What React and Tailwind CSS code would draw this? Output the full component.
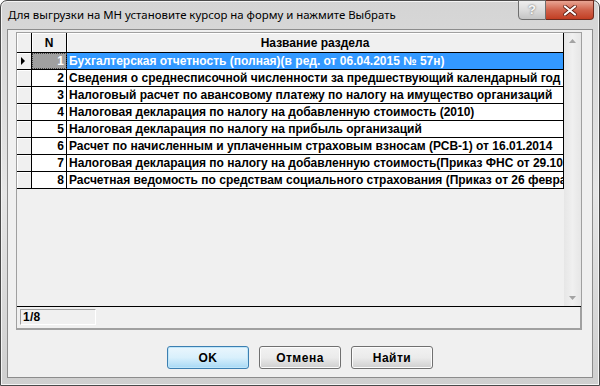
const rows = [
  "Бухгалтерская отчетность (полная)(в ред. от 06.04.2015 № 57н)",
  "Сведения о среднесписочной численности за предшествующий календарный год",
  "Налоговый расчет по авансовому платежу по налогу на имущество организаций",
  "Налоговая декларация по налогу на добавленную стоимость (2010)",
  "Налоговая декларация по налогу на прибыль организаций",
  "Расчет по начисленным и уплаченным страховым взносам (РСВ-1) от 16.01.2014",
  "Налоговая декларация по налогу на добавленную стоимость(Приказ ФНС от 29.10.2014 № ММВ-7-3/558@)",
  "Расчетная ведомость по средствам социального страхования (Приказ от 26 февраля 2015 № 59)",
];

const sans = { fontFamily: '"Liberation Sans", Arial, sans-serif' };
const titleFont = { fontFamily: '"Noto Sans", "Open Sans", sans-serif' };

function WinButton({ children, primary }) {
  return (
    <div
      className={
        "w-[82px] h-[23px] rounded-[3px] border flex items-center justify-center text-[12px] tracking-[0.5px] font-bold text-black " +
        (primary
          ? "border-[#3c7fb1] bg-gradient-to-b from-[#eaf6fd] via-[#d9f0fc] to-[#a7d9f5] shadow-[inset_0_0_0_1px_#bfe6fa]"
          : "border-[#707070] bg-gradient-to-b from-[#f2f2f2] via-[#ebebeb] to-[#cfcfcf] shadow-[inset_0_0_0_1px_#fcfcfc]")
      }
      style={sans}
    >
      {children}
    </div>
  );
}

export default function App() {
  return (
    <div className="w-[600px] h-[386px] bg-white">
      <div className="w-[600px] h-[386px] rounded-t-[7px] border border-[#4a4a4a] bg-gradient-to-b from-[#d4d4d4] via-[#e6e6e6] to-[#cfcfcf] flex flex-col px-[6px] pb-[7px] shadow-[inset_0_0_0_1px_#f4f4f4]">
        {/* title bar */}
        <div className="h-[28px] shrink-0 flex items-start">
          <span className="pl-[1px] pt-[6px] text-[11.4px] leading-[16px] text-black whitespace-nowrap" style={titleFont}>
            Для выгрузки на МН установите курсор на форму и нажмите Выбрать
          </span>
          <div className="ml-auto -mt-[1px] -mr-[1px] flex">
            <div className="w-[28px] h-[20px] rounded-bl-[4px] border border-[#6e6e6e] bg-gradient-to-b from-[#eeeeee] via-[#dcdcdc] to-[#c4c4c4] flex items-center justify-center text-[13px] font-bold text-[#f8f8f8] [text-shadow:0_0_2px_#555]" style={sans}>
              ?
            </div>
            <div className="w-[48px] h-[20px] rounded-br-[4px] border border-l-0 border-[#6e2a1e] bg-gradient-to-b from-[#e8a493] via-[#d0624b] to-[#c23d22] flex items-center justify-center">
              <svg width="14" height="11" viewBox="0 0 14 11">
                <path d="M2 1.5 L12 9.5 M12 1.5 L2 9.5" stroke="#5a1a10" strokeWidth="3.6" strokeLinecap="round" />
                <path d="M2 1.5 L12 9.5 M12 1.5 L2 9.5" stroke="#ffffff" strokeWidth="2.2" strokeLinecap="round" />
              </svg>
            </div>
          </div>
        </div>

        {/* client */}
        <div className="flex-1 border border-[#8c8c8c] bg-[#f0f0f0] flex flex-col pl-[8px] pr-[10px]">
          {/* grid */}
          <div className="mt-[2px] h-[298px] border border-[#a0a0a0] flex flex-col bg-[#f0f0f0]">
            <div className="h-[273px] flex">
              {/* table */}
              <div className="flex-1 flex flex-col overflow-hidden" style={sans}>
                <div className="h-[20px] shrink-0 flex border-b border-black text-[12px] font-bold text-black bg-[#f0f0f0]">
                  <div className="w-[15px] border-r border-black shadow-[inset_1px_1px_0_#ffffff]"></div>
                  <div className="w-[35px] border-r border-black flex items-center justify-center shadow-[inset_1px_1px_0_#ffffff]">N</div>
                  <div className="flex-1 border-r border-black flex items-center justify-center shadow-[inset_1px_1px_0_#ffffff]">Название раздела</div>
                </div>
                {rows.map((r, i) => (
                  <div key={i} className="h-[17px] shrink-0 flex border-b border-black text-[12px] font-bold">
                    <div className="w-[15px] border-r border-black bg-[#f0f0f0] flex items-center pl-[4px] shadow-[inset_1px_1px_0_#ffffff]">
                      {i === 0 && (
                        <svg width="5" height="8" viewBox="0 0 5 8">
                          <path d="M0 0 L4 4 L0 8 Z" fill="#000" />
                        </svg>
                      )}
                    </div>
                    <div
                      className={
                        "w-[35px] border-r border-black flex items-center justify-end pr-[2px] " +
                        (i === 0 ? "bg-[#a0a0a0] text-white outline outline-1 outline-dotted outline-[#404040] -outline-offset-1" : "bg-white text-black")
                      }
                    >
                      {i + 1}
                    </div>
                    <div
                      className={
                        "flex-1 min-w-0 border-r border-black flex items-center pl-[2px] whitespace-nowrap overflow-hidden " +
                        (i === 0 ? "bg-[#3399ff] text-white" : "bg-white text-black")
                      }
                    >
                      {r}
                    </div>
                  </div>
                ))}
              </div>
              {/* scrollbar */}
              <div className="w-[17px] shrink-0 bg-gradient-to-r from-[#e6e6e6] via-[#f0f0f0] to-[#e6e6e6] flex flex-col items-center justify-between py-[6px]">
                <svg width="7" height="4" viewBox="0 0 7 4">
                  <path d="M0 4 L3.5 0 L7 4 Z" fill="#a3a3a3" />
                </svg>
                <svg width="7" height="4" viewBox="0 0 7 4">
                  <path d="M0 0 L3.5 4 L7 0 Z" fill="#a3a3a3" />
                </svg>
              </div>
            </div>
            <div className="h-[1px] bg-black shrink-0"></div>
            <div className="flex-1 flex items-start pt-[2px] pl-[3px] border-r border-b border-[#a0a0a0] bg-[#f0f0f0]">
              <div className="w-[76px] h-[16px] border-t border-l border-[#a0a0a0] border-b border-r border-b-white border-r-white flex items-center pl-[2px] text-[12px] tracking-[0.3px] font-bold text-black" style={sans}>
                1/8
              </div>
            </div>
          </div>

          {/* buttons */}
          <div className="mt-[16px] flex justify-center gap-[10px] pl-[2px]">
            <WinButton primary>OK</WinButton>
            <WinButton>Отмена</WinButton>
            <WinButton>Найти</WinButton>
          </div>
        </div>
      </div>
    </div>
  );
}
